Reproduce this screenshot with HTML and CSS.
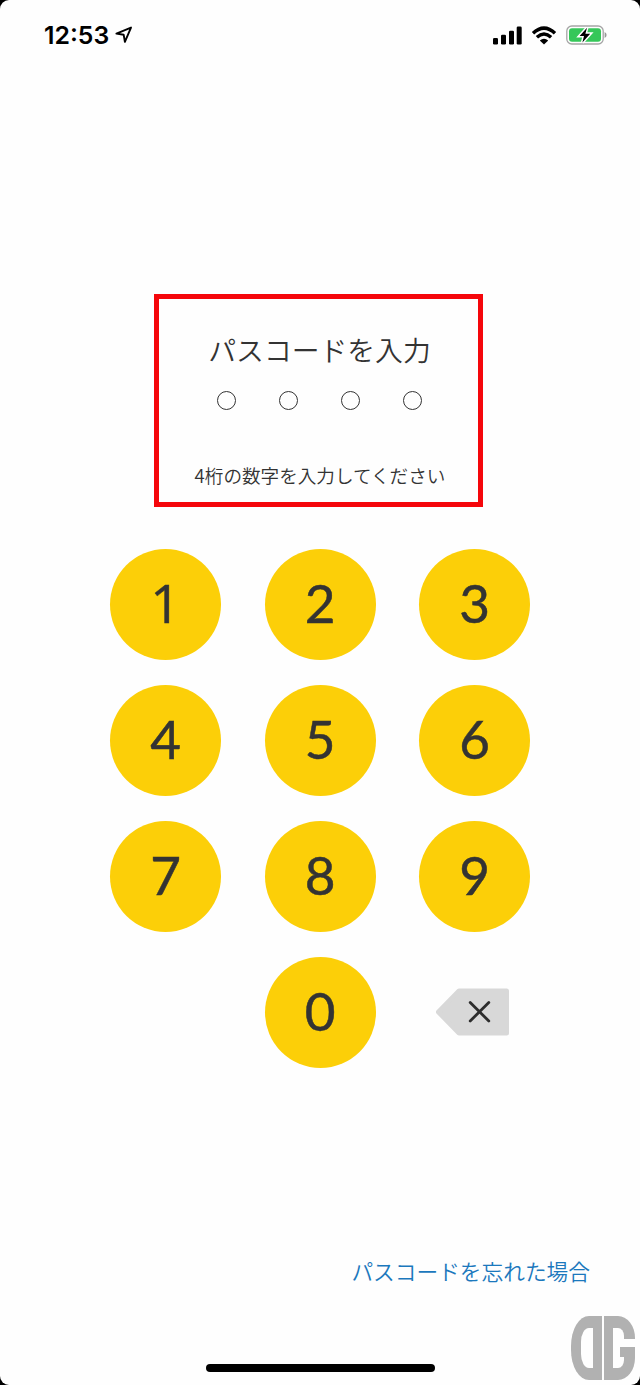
FILE: index.html
```
<!DOCTYPE html>
<html lang="ja">
<head>
    <meta charset="utf-8">
    <meta name="viewport" content="width=device-width, initial-scale=1">
    <title>パスコードを入力</title>
    <link rel="stylesheet" href="styles.css">
</head>
<body>
    <div class="screen">
        <header class="status-bar">
            <div class="clock">
                <span class="time">12:53</span>
                <svg class="location" width="18" height="18" viewBox="0 0 18 18">
                    <path d="M1.4 7.6 L16 1.6 L9.9 15.8 L8.7 8.8 Z" fill="none" stroke="#000" stroke-width="1.9" stroke-linejoin="round"/>
                </svg>
            </div>
            <div class="indicators">
                <svg width="29" height="19" viewBox="0 0 29 19">
                    <rect x="0" y="12" width="5" height="6.5" rx="1.3"/>
                    <rect x="8" y="8.7" width="5" height="9.8" rx="1.3"/>
                    <rect x="16" y="4.7" width="5" height="13.8" rx="1.3"/>
                    <rect x="23.7" y="0.5" width="5" height="18" rx="1.3"/>
                </svg>
                <svg width="26" height="19" viewBox="0 0 26 19">
                    <g fill="none" stroke="#000" stroke-width="3.5">
                        <path d="M2 7.2 Q13 -3 24 7.2"/>
                        <path d="M5.9 11.2 Q13 4.8 20.1 11.2"/>
                    </g>
                    <path d="M8.8 14.4 Q13 11 17.2 14.4 L13 18.5 Z"/>
                </svg>
                <svg width="41" height="22" viewBox="0 0 41 22">
                    <rect x="0.8" y="2" width="36.4" height="18" rx="5" fill="none" stroke="#a5a5a5" stroke-width="1.3"/>
                    <rect x="3" y="4.2" width="32" height="13.6" rx="3" fill="#35c759"/>
                    <path d="M38.6 8 Q40.6 9 40.6 11 Q40.6 13 38.6 14 Z" fill="#999"/>
                    <path d="M21 3.8 L13.6 12 H18 L16.4 18.4 L24.2 9.8 H19.4 Z" stroke="#fff" stroke-width="3" paint-order="stroke"/>
                </svg>
            </div>
        </header>

        <section class="prompt">
            <h1>パスコードを入力</h1>
            <div class="dots">
                <span></span>
                <span></span>
                <span></span>
                <span></span>
            </div>
            <p>4桁の数字を入力してください</p>
        </section>

        <main class="keypad">
            <button class="key one">1</button>
            <button class="key">2</button>
            <button class="key">3</button>
            <button class="key">4</button>
            <button class="key">5</button>
            <button class="key">6</button>
            <button class="key">7</button>
            <button class="key">8</button>
            <button class="key">9</button>
            <button class="key zero">0</button>
            <button class="delete" aria-label="削除">
                <svg width="74" height="48" viewBox="0 0 74 48">
                    <path d="M23 3 H70.5 V45 H23 L2.5 24 Z" fill="#d8d8d8" stroke="#d8d8d8" stroke-width="5" stroke-linejoin="round"/>
                    <path d="M34.2 14.4 L52.8 33 M52.8 14.4 L34.2 33" stroke="#2d2d2d" stroke-width="2.8" stroke-linecap="round"/>
                </svg>
            </button>
        </main>

        <a class="forgot" href="#">パスコードを忘れた場合</a>

        <div class="home-bar"></div>
        <div class="site-mark">
            <span class="mark-left"></span>
            <span class="mark-right"><i></i></span>
        </div>
    </div>
</body>
</html>
```
FILE: styles.css
```
* {
    box-sizing: border-box;
}

body {
    margin: 0;
    background-color: #000;
    color: #333;
    font-family: "Noto Sans CJK JP", sans-serif;
    font-weight: 350;
}

.screen {
    position: relative;
    display: flex;
    flex-direction: column;
    align-items: center;
    width: 640px;
    height: 1385px;
    background-color: #fefefe;
    border-radius: 9px;
    overflow: hidden;
}

.status-bar {
    display: flex;
    justify-content: space-between;
    align-items: center;
    width: 100%;
    height: 70px;
    padding: 0 33px 0 44px;
}

.clock {
    display: flex;
    align-items: center;
    gap: 6px;
    color: #000;
}

.time {
    font-family: Inter, sans-serif;
    font-size: 24.8px;
    font-weight: 600;
}

.indicators {
    display: flex;
    align-items: center;
    gap: 9px;
}

.prompt {
    display: flex;
    flex-direction: column;
    align-items: center;
    width: 329px;
    height: 213px;
    margin: 224px 3px 0 0;
    padding-top: 30px;
    border: 5px solid #f5060b;
}

.prompt h1 {
    margin: 0 0 0 2px;
    font-size: 27.8px;
    font-weight: 350;
    line-height: 40px;
}

.dots {
    display: flex;
    gap: 42.8px;
    margin: 22px 0 0 2px;
}

.dots span {
    width: 19px;
    height: 19px;
    border: 1.6px solid #333;
    border-radius: 50%;
}

.prompt p {
    margin: 51px 0 0 3px;
    font-size: 18.6px;
    line-height: 28px;
    white-space: nowrap;
}

.keypad {
    display: grid;
    grid-template-columns: repeat(3, 111px);
    gap: 25px 43.5px;
    margin-top: 42px;
}

.key {
    height: 111px;
    padding: 0 0 3px;
    border: none;
    border-radius: 50%;
    background-color: #fccf08;
    color: #333;
    font-family: Lato, sans-serif;
    font-size: 53px;
    line-height: 108px;
    -webkit-text-stroke: 0.5px #333;
    cursor: pointer;
}

/* plain 1 without a foot */
.one {
    font-family: "Open Sans", sans-serif;
}

.zero {
    grid-column: 2;
}

.delete {
    display: flex;
    align-items: center;
    padding: 0 0 1px 17px;
    border: none;
    background: none;
    cursor: pointer;
}

.forgot {
    align-self: flex-end;
    margin: 187px 50px 0 0;
    color: #1b78bd;
    font-size: 21.7px;
    line-height: 32px;
    text-decoration: none;
}

.home-bar {
    width: 229px;
    height: 8px;
    margin-top: auto;
    margin-bottom: 13px;
    border-radius: 4px;
    background-color: #000;
}

/* site mark over the bottom right corner */
.site-mark {
    position: absolute;
    right: 5px;
    bottom: 5px;
    display: flex;
    gap: 2px;
}

.mark-left,
.mark-right {
    position: relative;
    width: 31px;
    height: 64px;
    background-color: #b1b1b1;
}

.mark-left {
    border-radius: 18px 0 0 18px / 30px 0 0 30px;
}

.mark-right {
    border-radius: 0 17px 17px 0 / 0 22px 22px 0;
}

.mark-left::before,
.mark-right::before,
.mark-right::after,
.mark-right i {
    content: "";
    position: absolute;
    background-color: #fefefe;
}

.mark-left::before {
    top: 12px;
    left: 10px;
    width: 12px;
    height: 40px;
    border-radius: 8px 0 0 8px / 14px 0 0 14px;
}

.mark-right::before {
    top: 12px;
    left: 9px;
    width: 11px;
    height: 40px;
    border-radius: 0 6px 6px 0 / 0 8px 8px 0;
}

.mark-right::after {
    top: 23px;
    left: 16px;
    width: 15px;
    height: 8px;
}

.mark-right i {
    top: 31px;
    left: 16px;
    width: 5px;
    height: 10px;
    background-color: #b1b1b1;
}
```
